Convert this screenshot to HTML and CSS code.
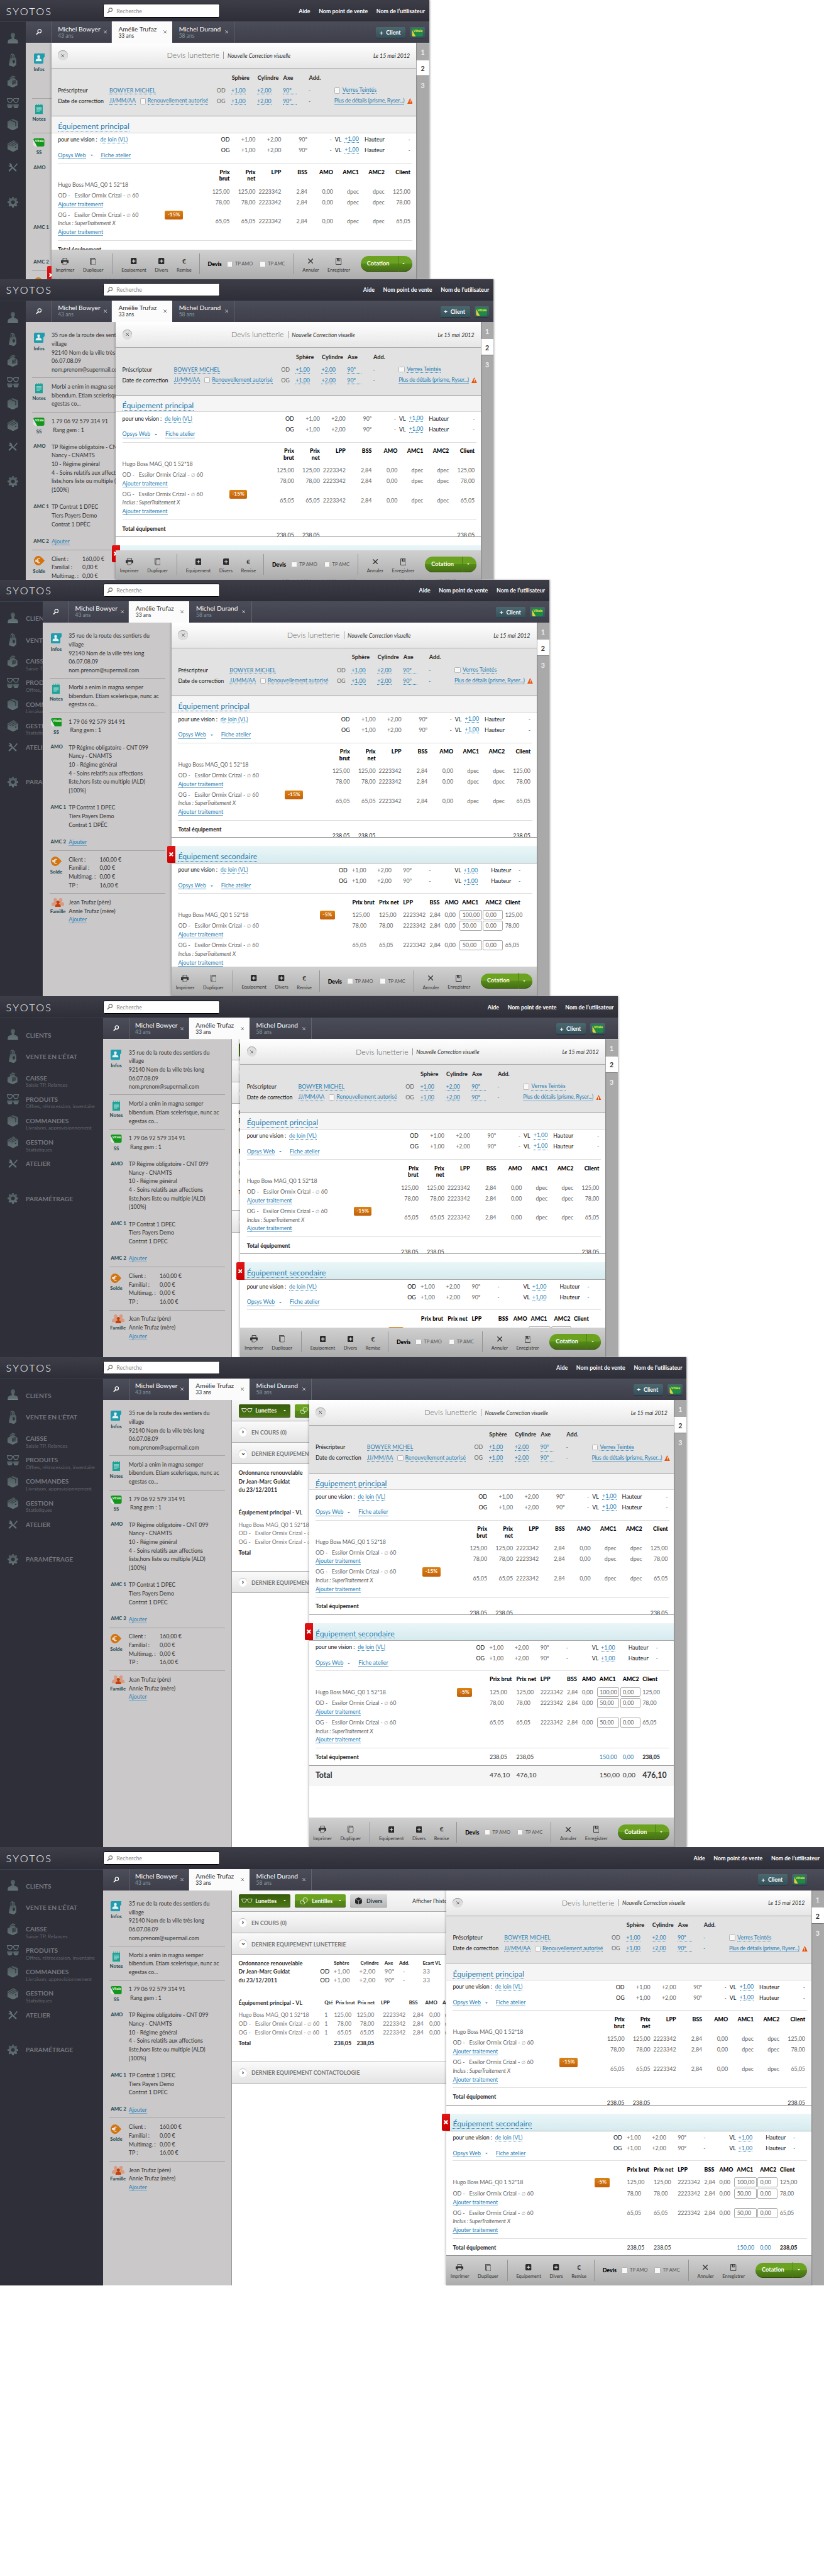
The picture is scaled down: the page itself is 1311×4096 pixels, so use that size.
FILE: index.html
```html
<!DOCTYPE html>
<html lang="fr">
<head>
<meta charset="utf-8">
<title>Syotos – Devis lunetterie</title>
<link rel="stylesheet" href="styles.css">
</head>
<body>
<svg class="sprite" aria-hidden="true">
  <defs>
    <linearGradient id="steel" x1="0" y1="0" x2="0" y2="1"><stop offset="0" stop-color="#4c5a5c"/><stop offset="1" stop-color="#647376"/></linearGradient>
    <clipPath id="vc"><rect width="26" height="19" rx="4"/></clipPath>
  </defs>
  <symbol id="i-search" viewBox="0 0 14 14"><circle cx="8.6" cy="5.2" r="4" fill="none" stroke="currentColor" stroke-width="1.8"/><path d="M6 8.3 1.2 13" stroke="currentColor" stroke-width="2.2"/></symbol>
  <symbol id="i-user" viewBox="0 0 25 25"><path d="M12.5 0c3 0 5 2.300 5 5.500 0 2-.9 4-2.200 5.200v3.300c4.500 1 8.500 2 9.200 6.500V25H.5v-4.500C1.200 16 5.200 15 9.700 14v-3.300C8.400 9.500 7.500 7.500 7.500 5.500 7.500 2.300 9.500 0 12.500 0z" fill="url(#steel)"/><path d="M.5 24.500h24" stroke="#8f9c9e"/></symbol>
  <symbol id="i-bag" viewBox="0 0 18 31"><path d="M5 11V4a3 3 0 0 1 5-2v9M9 10V4a2.500 2.500 0 0 1 4 0v9" fill="none" stroke="#647376" stroke-width="1.500"/><path fill-rule="evenodd" d="M3 11 15 9l2.500 4v13L12 31 0 28zM11.500 15a2.800 4 0 1 0 .1 0z" fill="url(#steel)"/></symbol>
  <symbol id="i-till" viewBox="0 0 24 28"><path d="M5 6 12 0l7 3-4 3 8 6v11l-11 5-12-5V12l6-3z" fill="url(#steel)"/><path d="m6 7 9-3M11 13l8-2v8l-8 2zM13.700 12v8M16.300 12v8M11 16l8-2M11 18.500l8-2" fill="none" stroke="#30313a"/></symbol>
  <symbol id="i-glasses" viewBox="0 0 28 24"><path d="M1 1h10l2 2h2l2-2h10l-1 5q-1 4-5 4-4 0-5-4l-1-3h-2l-1 3q-1 4-5 4-4 0-5-4z" fill="none" stroke="#647376" stroke-width="1.800"/><path d="M0 14h11l2 1h2l2-1h11l-1 5q-1 5-6 5t-5.500-5l-1-3h-1l-1 3q-1 5-5.500 5t-6-5z" fill="url(#steel)"/></symbol>
  <symbol id="i-box" viewBox="0 0 25 27"><path d="m12 0 12.500 5v16L12 27 0 21V6z" fill="url(#steel)"/><path d="m7 3 12 5v9" fill="none" stroke="#30313a" stroke-width="1.800"/></symbol>
  <symbol id="i-files" viewBox="0 0 26 27"><path d="m14 0 11 8v13l-12 6L0 21V8z" fill="url(#steel)"/><path d="m1 11 13-8M5 13l14-8M10 14l13-7" stroke="#30313a" stroke-width="1.300"/><circle cx="19" cy="16" r="1.500" fill="#30313a"/></symbol>
  <symbol id="i-tools" viewBox="0 0 22 21"><path d="M1 1.500 5.500 1 9 4.500l-.500 2L20 18l-2 2.500L6 9H3L.500 6l3 .500 1-2z" fill="#647376"/><path d="m20 1 2 2-7.500 8.500L13 10zM11.500 11.500 3 20.500.500 18 9.500 9.500z" fill="#647376"/></symbol>
  <symbol id="i-gear" viewBox="0 0 25 25"><path fill-rule="evenodd" d="M10.500 0h4l.5 3.300 2.200.9 2.700-2 2.800 2.900-2 2.600.9 2.300 3.400.5v4l-3.400.5-.9 2.200 2 2.700-2.800 2.800-2.700-2-2.200 1-.5 3.300h-4L10 21.700l-2.200-1-2.700 2-2.800-2.800 2-2.700-.9-2.200L0 14.500v-4l3.400-.5.9-2.300-2-2.600 2.800-2.900 2.700 2L10 3.300zM12.500 8a4.500 4.500 0 1 0 .1 0z" fill="url(#steel)"/></symbol>
  <symbol id="i-info" viewBox="0 0 25 24"><path d="M3 0h22v8l-3 3v10q0 3-3 3H3q-3 0-3-3V3q0-3 3-3z" fill="#1f9cad"/><path d="M11 4c2 0 3.300 1.300 3.300 3.300 0 1.200-.6 2.300-1.300 3V12c2.500.7 4.700 1.200 5 3.500V18H4v-2.500C4.300 13.200 6.500 12.700 9 12v-1.700c-.7-.7-1.300-1.800-1.300-3C7.700 5.300 9 4 11 4z" fill="#e4efef"/></symbol>
  <symbol id="i-notes" viewBox="0 0 18 24"><path d="M0 3h2V0h1.500v3H7V0h1.500v3H11V0h1.500v3H15V0h1.500v3H18v21H0z" fill="#1ca296"/><path d="M3 8.500h12M3 11.500h12M3 14.500h12M3 17.500h8" stroke="#cfe8e4" stroke-width="1.300"/></symbol>
  <symbol id="i-vitale" viewBox="0 0 26 19"><g clip-path="url(#vc)"><rect width="26" height="19" fill="#12961c"/><path d="M0 3 9 19H0z" fill="#e4e4e4"/><text x="3.500" y="9" font-family="Lato,sans-serif" font-weight="900" font-size="8" fill="#e6f3df">Vitale</text></g></symbol>
  <symbol id="i-vitale-y" viewBox="0 0 26 19"><g clip-path="url(#vc)"><rect width="26" height="19" fill="#1e8a46"/><path d="M0 3 9 19H0z" fill="#dfd23a"/><text x="3.500" y="9" font-family="Lato,sans-serif" font-weight="900" font-size="8" fill="#eee64a">Vitale</text></g></symbol>
  <symbol id="i-solde" viewBox="0 0 25 22"><path d="M10 0c5 0 8 3 15 11-7 8-10 11-15 11A10 11 0 0 1 10 0z" fill="#d2740f"/><path d="M14 6.500A5 5 0 1 0 14 15.500M3 9.700h8M3 12.300h8" fill="none" stroke="#eee" stroke-width="1.700"/></symbol>
  <symbol id="i-family" viewBox="0 0 30 21"><path d="M9 0a4 4 0 0 1 2.500 7l1.500 2-2 9H0c0-6 1-8 6-9V7a4 4 0 0 1 3-7zm12 0a4 4 0 0 0-2.500 7L17 9l2 9h11c0-6-1-8-6-9V7a4 4 0 0 0-3-7z" fill="#d99a80"/><path d="M15 6a3.500 3.500 0 0 1 2 6.500v1.500c4 1 4.500 3 4.500 7h-13c0-4 .5-6 4.500-7v-1.500A3.500 3.500 0 0 1 15 6z" fill="#c2410c"/></symbol>
  <symbol id="i-warn" viewBox="0 0 13 13"><path d="M6.500 0 13 13H0z" fill="#e8500a"/><path d="M6.500 4v5M6.500 10v1.500" stroke="#fff" stroke-width="1.600"/></symbol>
  <symbol id="i-print" viewBox="0 0 18 17"><path d="M4.500 6V.6h9V6" fill="none" stroke="#333" stroke-width="1.300"/><path d="M1.500 5h15q1.500 0 1.500 1.500V12h-3.500V9h-10v3H0V6.500Q0 5 1.500 5z" fill="#333"/><path d="M4.500 9.500v6.800h6.500l3-3V9.500" fill="none" stroke="#333" stroke-width="1.200"/></symbol>
  <symbol id="i-copy" viewBox="0 0 14 17"><path d="M3 14.500H.7V.7h10.600V3" fill="none" stroke="#333" stroke-width="1.200"/><path d="M3 3h10.300v11l-2 2.300H3z" fill="none" stroke="#333" stroke-width="1.200"/></symbol>
  <symbol id="i-plus" viewBox="0 0 14 15"><rect width="14" height="15" rx="2.500" fill="#2b2b2b"/><path d="M7 3.500v8M3 7.500h8" stroke="#ddd" stroke-width="1.800"/></symbol>
  <symbol id="i-cross" viewBox="0 0 12 12"><path d="m.5.5 11 11M11.500.5l-11 11" stroke="currentColor" stroke-width="2"/></symbol>
  <symbol id="i-kill" viewBox="0 0 12 12"><path d="m1 1 10 10M11 1 1 11" stroke="currentColor" stroke-width="3.800"/></symbol>
  <symbol id="i-thin" viewBox="0 0 8 8"><path d="m.5.5 7 7M7.500.5l-7 7" stroke="currentColor" stroke-width="1.100"/></symbol>
  <symbol id="i-save" viewBox="0 0 14 16"><path d="M.7.700h11l1.600 1.600v13H.700z" fill="none" stroke="#333" stroke-width="1.300"/><path d="M4 1v6h6V1" fill="none" stroke="#333" stroke-width="1.200"/><path d="M4 1h3v5H4z" fill="#333"/></symbol>
  <symbol id="i-specs" viewBox="0 0 26 10"><path d="M.8.800h9.500l2 1.500h1.400l2-1.500h9.500l-1 3.500Q23 9.200 19.500 9.200T15 5l-1-2.500h-2L11 5q-1 4.200-4.500 4.200T1.800 4.300z" fill="none" stroke="#fff" stroke-width="1.300"/></symbol>
  <symbol id="i-lens" viewBox="0 0 19 17"><circle cx="12.700" cy="6" r="5.300" fill="none" stroke="#fff" stroke-width="1.100"/><ellipse cx="6" cy="12" rx="5.500" ry="3.800" transform="rotate(35 6 12)" fill="none" stroke="#fff" stroke-width="1.100"/></symbol>
  <symbol id="i-cube" viewBox="0 0 16 17"><path d="m8 0 8 3.500-8 3.500L0 3.500zM0 4.500l7.500 3.300V17L0 13.200zM16 4.500 8.500 7.800V17L16 13.200z" fill="#262626"/></symbol>
</svg>

<main class="board">
  <div class="screen screen-a"></div>
  <div class="screen screen-b"></div>
  <div class="screen screen-c"></div>
  <div class="screen screen-d"></div>
  <div class="screen screen-e"></div>
  <div class="screen screen-f"></div>
</main>

<template id="screen">
  <header class="top">
    <div class="brand">SYOTOS</div>
    <div class="search"><svg><use href="#i-search"/></svg>Recherche</div>
    <nav class="links"><span>Aide</span><span>Nom point de vente</span><span>Nom de l’utilisateur</span></nav>
  </header>
  <div class="below">
    <aside class="side">
      <div class="entry"><i><svg width="25" height="25"><use href="#i-user"/></svg></i><p><b>CLIENTS</b></p></div>
      <div class="entry"><i><svg width="18" height="31"><use href="#i-bag"/></svg></i><p><b>VENTE EN L’ÉTAT</b></p></div>
      <div class="entry duo"><i><svg width="24" height="28"><use href="#i-till"/></svg></i><p><b>CAISSE</b><small>Saisie TP, Relances</small></p></div>
      <div class="entry duo"><i><svg width="28" height="24"><use href="#i-glasses"/></svg></i><p><b>PRODUITS</b><small>Offres, rétrocession, inventaire</small></p></div>
      <div class="entry duo"><i><svg width="25" height="27"><use href="#i-box"/></svg></i><p><b>COMMANDES</b><small>Livraison, approvisionnement</small></p></div>
      <div class="entry duo"><i><svg width="26" height="27"><use href="#i-files"/></svg></i><p><b>GESTION</b><small>Statistiques</small></p></div>
      <div class="entry"><i><svg width="22" height="21"><use href="#i-tools"/></svg></i><p><b>ATELIER</b></p></div>
      <div class="entry last"><i><svg width="25" height="25"><use href="#i-gear"/></svg></i><p><b>PARAMÉTRAGE</b></p></div>
    </aside>
    <div class="main">
      <div class="tabs">
        <div class="tab find"><svg width="14" height="14"><use href="#i-search"/></svg></div>
        <div class="tab"><p>Michel Bowyer<small>43 ans</small></p><svg width="8" height="8"><use href="#i-thin"/></svg></div>
        <div class="tab on"><p>Amélie Trufaz<small>33 ans</small></p><svg width="8" height="8"><use href="#i-thin"/></svg></div>
        <div class="tab wide"><p>Michel Durand<small>58 ans</small></p><svg width="8" height="8"><use href="#i-thin"/></svg></div>
        <div class="btn-client"><span>+</span>Client</div>
        <div class="btn-vitale"><svg width="27" height="19"><use href="#i-vitale-y"/></svg></div>
      </div>
      <div class="work">
        <section class="patient">
          <div class="sec first">
            <div class="fact"><div class="tag t5"><svg width="25" height="24"><use href="#i-info"/></svg>Infos</div><p>35 rue de la route des sentiers du<br>village<br>92140 Nom de la ville très long<br>06.07.08.09<br>nom.prenom@supermail.com</p></div>
          </div>
          <div class="sec">
            <div class="fact"><div class="tag"><svg width="18" height="24"><use href="#i-notes"/></svg>Notes</div><p>Morbi a enim in magna semper<br>bibendum. Etiam scelerisque, nunc ac<br>egestas co...</p></div>
          </div>
          <div class="sec">
            <div class="fact"><div class="tag ss"><svg width="26" height="19"><use href="#i-vitale"/></svg>SS</div><p>1 79 06 92 579 314 91<br>&nbsp;Rang gem : 1</p></div>
            <div class="fact gap"><div class="tag txt">AMO</div><p>TP Régime obligatoire - CNT 099<br>Nancy - CNAMTS<br>10 - Régime général<br>4 - Soins relatifs aux affections<br>liste,hors liste ou multiple (ALD)<br>{100%}</p></div>
            <div class="fact gap"><div class="tag txt">AMC 1</div><p>TP Contrat 1 DPEC<br>Tiers Payers Demo<br>Contrat 1 DPËC</p></div>
            <div class="fact gap"><div class="tag txt">AMC 2</div><p><a class="u">Ajouter</a></p></div>
          </div>
          <div class="sec">
            <div class="fact"><div class="tag t5"><svg width="25" height="22"><use href="#i-solde"/></svg>Solde</div>
              <div class="sums"><span>Client :</span><span>160,00 €</span><span>Familial :</span><span>0,00 €</span><span>Multimag. :</span><span>0,00 €</span><span>TP :</span><span>16,00 €</span></div></div>
          </div>
          <div class="sec end">
            <div class="fact"><div class="tag fam"><svg width="30" height="21"><use href="#i-family"/></svg>Famille</div><p>Jean Trufaz (père)<br>Annie Trufaz (mère)<br><a class="u">Ajouter</a></p></div>
          </div>
        </section>

        <section class="history">
          <div class="tools">
            <div class="gbtn dark"><svg width="26" height="10"><use href="#i-specs"/></svg><span>Lunettes</span><i class="caret"></i></div>
            <div class="gbtn"><svg width="19" height="17"><use href="#i-lens"/></svg><span>Lentilles</span><i class="caret"></i></div>
            <div class="gbtn grey"><svg width="16" height="17"><use href="#i-cube"/></svg><span>Divers</span></div>
            <span class="show">Afficher l’historique</span>
          </div>
          <div class="fold"><i class="knob">›</i>EN COURS (0)</div>
          <div class="fold"><i class="knob down">›</i>DERNIER EQUIPEMENT LUNETTERIE</div>
          <div class="last-eq">
            <div class="presc">
              <b>Ordonnance renouvelable</b><span></span><b class="h">Sphère</b><b class="h">Cylindre</b><b class="h">Axe</b><b class="h">Add.</b><b class="h">Ecart VL</b>
              <b>Dr Jean-Marc Guidat</b><span class="eye">OD</span><span>+1,00</span><span>+2,00</span><span>90º</span><span>&nbsp; -</span><span>33</span>
              <b>du 23/12/2011</b><span class="eye">OD</span><span>+1,00</span><span>+2,00</span><span>90º</span><span>&nbsp; -</span><span>33</span>
            </div>
            <div class="lines-head"><b>Équipement principal - VL</b><b>Qté</b><b>Prix brut</b><b>Prix net</b><b>LPP</b><b>BSS</b><b>AMO</b><b>AMC1</b></div>
            <div class="lines">
              <span class="hb">Hugo Boss MAG_Q0 1 52*18</span><span>1</span><span>125,00</span><span>125,00</span><span>2223342</span><span>2,84</span><span>0,00</span><span>dpec</span>
              <span>OD -&nbsp;&nbsp; Essilor Ormix Crizal - <em>∅</em> 60</span><span>1</span><span>78,00</span><span>78,00</span><span>2223342</span><span>2,84</span><span>0,00</span><span>dpec</span>
              <span>OG -&nbsp;&nbsp; Essilor Ormix Crizal - <em>∅</em> 60</span><span>1</span><span>65,05</span><span>65,05</span><span>2223342</span><span>2,84</span><span>0,00</span><span>dpec</span>
            </div>
            <div class="lines sum"><b>Total</b><b></b><b>238,05</b><b>238,05</b></div>
          </div>
          <div class="fold"><i class="knob">›</i>DERNIER EQUIPEMENT CONTACTOLOGIE</div>
        </section>

        <div class="rail"><span>1</span><span class="on">2</span><span>3</span></div>

        <article class="quote">
          <div class="q-head">
            <i class="close"><svg width="8" height="8"><use href="#i-thin"/></svg></i>
            <h1>Devis lunetterie</h1><em>Nouvelle Correction visuelle</em><em class="date">Le 15 mai 2012</em>
          </div>
          <div class="q-rx">
            <span></span><span></span><span></span><b>Sphère</b><b>Cylindre</b><b>Axe</b><b>Add.</b><span></span>
            <span class="k">Préscripteur</span><span><a>BOWYER MICHEL</a></span><span>OD</span><span><a>+1,00</a></span><span><a>+2,00</a></span><span><a class="w33">90º</a></span><span class="blue">-</span><span class="opt"><i class="chk"></i><a>Verres Teintés</a></span>
            <span class="k">Date de correction</span><span class="opt"><a class="jj">JJ/MM/AA</a><i class="chk mid"></i><a>Renouvellement autorisé</a></span><span>OG</span><span><a>+1,00</a></span><span><a>+2,00</a></span><span><a class="w33">90º</a></span><span class="blue">-</span><span class="opt"><a class="u tight">Plus de détails (prisme, Ryser...)</a><svg width="13" height="13"><use href="#i-warn"/></svg></span>
          </div>
          <div class="eq one">
            <h2><a>Équipement principal</a></h2>
            <div class="vision">
              <div class="left"><p>pour une vision :<a>de loin (VL)</a></p><p class="more"><a class="u">Opsys Web</a><i class="caret"></i><a class="u">Fiche atelier</a></p></div>
              <div class="eyes">
                <span class="k">OD</span><span>+1,00</span><span>+2,00</span><span>90º</span><span>-&nbsp;</span><span class="vl">VL <a>+1,00</a></span><span class="k">Hauteur</span><span class="blue">-</span>
                <span class="k">OG</span><span>+1,00</span><span>+2,00</span><span>90º</span><span>-&nbsp;</span><span class="vl">VL <a>+1,00</a></span><span class="k">Hauteur</span><span class="blue">-</span>
              </div>
            </div>
            <div class="items">
              <div class="names">
                <div class="hb">Hugo Boss MAG_Q0 1 52*18</div>
                <div>OD -&nbsp;&nbsp; Essilor Ormix Crizal - <em>∅</em> 60<br><a class="u">Ajouter traitement</a></div>
                <div class="disc">OG -&nbsp;&nbsp; Essilor Ormix Crizal - <em>∅</em> 60<span class="badge">-15%</span><br><cite>Inclus : SuperTraitement X</cite><br><a class="u">Ajouter traitement</a></div>
              </div>
              <div class="nums">
                <b>Prix<br>brut</b><b>Prix<br>net</b><b>LPP</b><b>BSS</b><b>AMO</b><b>AMC1</b><b>AMC2</b><b>Client</b>
                <span>125,00</span><span>125,00</span><span>2223342</span><span>2,84</span><span>0,00</span><span>dpec</span><span>dpec</span><span>125,00</span>
                <span>78,00</span><span>78,00</span><span>2223342</span><span>2,84</span><span>0,00</span><span>dpec</span><span>dpec</span><span>78,00</span>
                <span>65,05</span><span>65,05</span><span>2223342</span><span>2,84</span><span>0,00</span><span>dpec</span><span>dpec</span><span>65,05</span>
              </div>
            </div>
            <div class="sum"><b>Total équipement</b><span>238,05</span><span>238,05</span><span class="far">238,05</span></div>
          </div>
          <div class="eq two">
            <i class="kill"><svg width="10" height="10"><use href="#i-kill"/></svg></i>
            <h2><a>Équipement secondaire</a></h2>
            <div class="vision">
              <div class="left"><p>pour une vision :<a>de loin (VL)</a></p><p class="more"><a class="u">Opsys Web</a><i class="caret"></i><a class="u">Fiche atelier</a></p></div>
              <div class="eyes">
                <span class="k">OD</span><span>+1,00</span><span>+2,00</span><span>90º</span><span>-</span><span class="k">VL</span><span><a>+1,00</a></span><span class="k">Hauteur</span><span class="blue">-</span>
                <span class="k">OG</span><span>+1,00</span><span>+2,00</span><span>90º</span><span>-</span><span class="k">VL</span><span><a>+1,00</a></span><span class="k">Hauteur</span><span class="blue">-</span>
              </div>
            </div>
            <div class="rows">
              <div class="row head"><span></span><b>Prix brut</b><b>Prix net</b><b>LPP</b><b>BSS</b><b>AMO</b><b class="in">AMC1</b><b class="in">AMC2</b><b>Client</b></div>
              <div class="row"><span class="disc"><span class="hb">Hugo Boss MAG_Q0 1 52*18</span><span class="badge">-5%</span></span><span>125,00</span><span>125,00</span><span>2223342</span><span>2,84</span><span>0,00</span><span class="box">100,00</span><span class="box">0,00</span><span>125,00</span></div>
              <div class="row"><span>OD -&nbsp;&nbsp; Essilor Ormix Crizal - <em>∅</em> 60<br><a class="u">Ajouter traitement</a></span><span>78,00</span><span>78,00</span><span>2223342</span><span>2,84</span><span>0,00</span><span class="box">50,00</span><span class="box">0,00</span><span>78,00</span></div>
              <div class="row"><span>OG -&nbsp;&nbsp; Essilor Ormix Crizal - <em>∅</em> 60<br><cite>Inclus : SuperTraitement X</cite><br><a class="u">Ajouter traitement</a></span><span>65,05</span><span>65,05</span><span>2223342</span><span>2,84</span><span>0,00</span><span class="box">50,00</span><span class="box">0,00</span><span>65,05</span></div>
            </div>
            <div class="row total"><b>Total équipement</b><span>238,05</span><span>238,05</span><span></span><span></span><span></span><span class="in blue">150,00</span><span class="in blue">0,00</span><b>238,05</b></div>
            <div class="row grand"><b>Total</b><span>476,10</span><span>476,10</span><span></span><span></span><span></span><span class="in">150,00</span><span class="in">0,00</span><b>476,10</b></div>
          </div>
          <footer class="q-foot">
            <div class="grp g1"><div class="act"><svg width="18" height="17"><use href="#i-print"/></svg>Imprimer</div><div class="act"><svg width="14" height="17"><use href="#i-copy"/></svg>Dupliquer</div></div>
            <div class="grp g2"><div class="act"><svg width="14" height="15"><use href="#i-plus"/></svg>Equipement</div><div class="act"><svg width="14" height="15"><use href="#i-plus"/></svg>Divers</div><div class="act"><strong>€</strong>Remise</div></div>
            <div class="grp g3"><b>Devis</b><i class="chk"></i><span>TP AMO</span><i class="chk"></i><span>TP AMC</span></div>
            <div class="grp g4"><div class="act"><svg width="12" height="12"><use href="#i-cross"/></svg>Annuler</div><div class="act"><svg width="14" height="16"><use href="#i-save"/></svg>Enregistrer</div></div>
            <div class="cta"><span>Cotation</span><i class="caret"></i></div>
          </footer>
        </article>
      </div>
    </div>
  </div>
</template>
<script src="app.js"></script>
</body>
</html>
```
FILE: app.js
```js
// Every screen shows the same application at another window size.
const tpl = document.getElementById('screen');
document.querySelectorAll('.screen').forEach(el => el.append(tpl.content.cloneNode(true)));
```
FILE: styles.css
```css
* { box-sizing: border-box; }
html, body { margin: 0; background: #fff; overflow: hidden; }
body { font-family: Lato, "Liberation Sans", sans-serif; font-size: 13px; color: #333; }
p, h1, h2 { margin: 0; font-weight: 400; }
i { font-style: normal; }
svg { display: block; flex: none; }
.sprite { position: absolute; width: 0; height: 0; }

.board { width: 1920px; height: 6000px; zoom: .68281; overflow: hidden; }
.screen { display: flex; flex-direction: column; box-shadow: 3px 0 4px rgba(0,0,0,.35); }
.screen-a { width: 1000px; height: 650px; --side: 60px; }
.screen-b { width: 1150px; height: 700px; --side: 60px; }
.screen-c { width: 1280px; height: 970px; --side: 100px; }
.screen-d { width: 1440px; height: 840px; --side: 240px; --edge: 30px; }
.screen-e { width: 1600px; height: 1142px; --side: 240px; }
.screen-f { width: 1920px; height: 1020px; --side: 240px; --edge: 40px; box-shadow: none; }

/* top bar */
.top { flex: none; height: 50px; display: flex; align-items: center; background: linear-gradient(#3c3d47, #2d2e37); position: relative; z-index: 1; }
.brand { width: 240px; padding-left: 14px; font-size: 24px; font-weight: 300; letter-spacing: 3.2px; color: #fff; }
.search { width: 273px; height: 31px; border: 1px solid #000; border-radius: 4px; background: #fff; display: flex; align-items: center; gap: 8px; padding-left: 8px; color: #8b8b8b; }
.search svg { width: 14px; height: 14px; color: #777; }
.links { margin-left: auto; padding-right: 10px; display: flex; gap: 20px; color: #fff; font-weight: 700; }

/* left menu */
.below { flex: 1; min-height: 0; display: flex; }
.side { flex: none; width: var(--side); overflow: hidden; background: #2e2f38; border-top: 1px solid #38424f; padding-top: 14px; color: #76777f; }
.entry { display: flex; width: 240px; height: 50px; }
.entry.last { margin-top: 31px; }
.entry i { width: 60px; display: grid; place-items: center; }
.entry:first-child i { padding-bottom: 4px; }
.entry p { display: flex; flex-direction: column; justify-content: center; padding-top: 2px; }
.entry b { font-size: 15px; line-height: 17px; font-weight: 700; white-space: nowrap; }
.entry.duo p { justify-content: flex-start; padding-top: 17px; }
.entry small { font-size: 12px; line-height: 15px; color: #63646d; white-space: nowrap; }
.screen-a .side p, .screen-b .side p { display: none; }

/* client tabs */
.main { flex: 1; min-width: 0; display: flex; flex-direction: column; }
.tabs { flex: none; height: 50px; display: flex; background: linear-gradient(#4b4d58, #3d3e49); padding-right: var(--edge, 10px); }
.tab { width: 140px; display: flex; align-items: center; border-right: 1px solid #62646f; padding-left: 14px; color: #fff; font-size: 15px; }
.tab p { line-height: 16px; width: 106px; white-space: nowrap; }
.tab small { display: block; font-size: 12.500px; line-height: 15px; color: #83999e; }
.tab.find { width: 61px; padding-left: 23px; }
.tab.on { background: #fbfbfb; color: #333; border-color: #fbfbfb; padding-left: 15px; }
.tab.on small { color: #333; }
.tab.on p { width: 105px; }
.tab.wide { width: 146px; padding-left: 16px; }
.tab.wide p { width: 107px; }
.btn-client, .btn-vitale { height: 25px; margin-top: 13px; border-radius: 3px; background: linear-gradient(#4b686f, #35505a); box-shadow: 0 1px 0 #1c2d34; color: #fff; display: flex; align-items: center; }
.btn-client { width: 69px; margin-left: auto; padding-left: 8px; gap: 7px; font-weight: 700; }
.btn-client span { font-weight: 900; font-size: 15px; }
.btn-vitale { width: 35px; margin-left: 10px; padding-left: 4px; }

.work { flex: 1; min-height: 0; display: flex; position: relative; clip-path: inset(0); }

/* patient summary */
.patient { flex: none; width: 301px; background: #cac8c9; border-right: 1px solid #999; overflow: hidden; color: #333; line-height: 20px; white-space: nowrap; letter-spacing: -.05px; }
.sec { margin: 0 15px; padding: 10px 0 9px; border-bottom: 1px solid #a3a2a3; }
.sec.first { padding: 21px 0 8px; }
.sec.end { border: 0; }
.fact { display: flex; }
.fact.gap { margin-top: 20px; }
.tag { flex: none; width: 45px; height: 40px; padding: 2px 13px 0 0; display: flex; flex-direction: column; align-items: center; gap: 3px; font-size: 11.500px; line-height: 16px; font-weight: 900; color: #2e5058; letter-spacing: 0; }
.tag.t5 { padding-top: 4px; gap: 5px; }
.tag.ss { gap: 5px; }
.tag.fam { padding: 0 5px 0 0; gap: 2px; }
.tag.txt { height: 20px; padding: 1px 0 0 3px; align-items: flex-start; }
.sums { display: grid; grid-template-columns: 72px auto; }

a { color: #2b80b3; border-bottom: 1px dotted #2b80b3; white-space: nowrap; line-height: 1; }
a.u { border-bottom-style: solid; border-color: #6faad0; }
.blue { color: #2b80b3; }
.hb { letter-spacing: -.18px; }
.caret { display: inline-block; border: 3.500px solid transparent; border-top: 4px solid currentColor; border-bottom: 0; }

/* purchase history */
.history { flex: 1; min-width: 0; overflow: hidden; background: #fff; white-space: nowrap; }
.screen-a .history, .screen-b .history, .screen-c .history { display: none; }
.history > * { width: 1000px; }
.tools { height: 50px; display: flex; align-items: center; gap: 10px; padding: 2px 15px 0; background: linear-gradient(#f8f8f8, #ebebeb); border-bottom: 1px solid #aaa; }
.gbtn { height: 31px; width: 121px; border-radius: 3px; border-bottom: 1px solid #1d2e08; padding-left: 7px; display: flex; align-items: center; background: linear-gradient(#6ba321 48%, #558a19 52%, #527f17); color: #fff; font-weight: 700; }
.gbtn span { margin-left: 6px; }
.gbtn .caret { margin-left: auto; margin-right: 10px; }
.gbtn.dark { background: linear-gradient(#365a0c, #4a7712); }
.gbtn:nth-child(2) { width: 119px; padding-left: 11px; }
.gbtn:nth-child(2) span { margin-left: 10px; }
.gbtn.grey { width: 86px; padding-left: 11px; background: linear-gradient(#dadada, #b8b8b8); color: #2a3d44; border-color: #888; }
.gbtn.grey span { margin-left: 11px; }
.show { margin-left: 49px; }
.fold { height: 50px; display: flex; align-items: center; gap: 10px; padding: 2px 0 0 15px; background: linear-gradient(#fafafa, #e4e4e4); border-bottom: 1px solid #aaa; color: #777; font-weight: 700; letter-spacing: -.05px; }
.knob { width: 20px; height: 20px; border-radius: 50%; background: #fff; box-shadow: inset 0 1px 1px #aaa; display: grid; place-items: center; color: #222; font-size: 17px; line-height: 15px; font-weight: 900; padding-bottom: 3px; }
.knob.down { transform: rotate(90deg); box-shadow: inset 1px 0 1px #aaa; }
.last-eq { height: 250px; padding: 10px 0 0 15px; line-height: 20px; border-bottom: 1px solid #aaa; }
.presc { display: grid; grid-template-columns: 190px 31px 60px 59px 34px 55px auto; font-size: 14px; letter-spacing: .6px; color: #777; }
.presc b { font-size: 13px; letter-spacing: 0; color: #333; }
.presc .h { font-size: 11.500px; font-weight: 900; }
.presc .h:nth-child(3) { margin-left: 1px; }
.presc .h:nth-child(4) { margin-left: 3px; }
.presc .eye { color: #111; letter-spacing: 0; }
.lines-head { display: grid; grid-template-columns: 200px 26px 51px 54.600px 65.400px 38px 40px auto; padding-top: 32px; font-size: 11.500px; }
.lines-head b { font-weight: 900; }
.lines-head b:first-child { font-size: 13px; font-weight: 700; }
.lines { display: grid; grid-template-columns: 200px 9px 54px 53px 73px 42px 39px 50px; padding-top: 9px; color: #777; }
.lines > :nth-child(8n+3), .lines > :nth-child(8n+4), .lines > :nth-child(8n+5), .lines > :nth-child(8n+6), .lines > :nth-child(8n+7) { text-align: right; }
.lines > :nth-child(8n) { padding-left: 11px; }
.lines.sum { padding-top: 5px; color: #333; }
.lines.sum b { font-weight: 900; }
em { font-style: normal; }
.lines em, .names em, .rows em { color: #999; font-family: "DejaVu Sans", sans-serif; font-size: 11px; line-height: 1; }

/* page rail */
.rail { flex: none; width: 30px; margin-left: auto; background: linear-gradient(90deg, #999, #a9a9a9 4px); display: flex; flex-direction: column; color: #eee; font-size: 15.500px; font-weight: 700; position: relative; }
.rail span { height: 40px; display: grid; place-items: center; padding-top: 4px; }
.rail .on { height: 38px; background: #fff; color: #333; border-radius: 0 2px 2px 0; border-bottom: 1px solid #777; }

/* quote drawer */
.quote { position: absolute; top: 0; bottom: 0; right: 30px; width: 850px; background: #fff; box-shadow: -2px 0 5px rgba(0,0,0,.3), 1px 0 0 #888; color: #666; display: flex; flex-direction: column; white-space: nowrap; }
.quote > * { flex: none; }
.q-head { height: 60px; padding: 0 15px; display: flex; align-items: center; border-bottom: 1px solid #aaa; background: linear-gradient(#fff, #e6e6e6); color: #333; font-size: 12.850px; }
.close { width: 23px; height: 23px; border-radius: 50%; background: #ddd; box-shadow: inset 0 1px 1px #888; display: grid; place-items: center; }
.q-head h1 { margin: 0 8px 0 231px; font-size: 18px; font-weight: 300; line-height: 17px; color: #666; border-right: 1px solid #999; width: 133px; }
.q-head em { font-style: italic; padding-top: 1px; }
.q-head .date { margin-left: auto; }
.q-rx { height: 111px; padding: 11px 9px 0 15px; background: #e2e2e2; border-bottom: 1px solid #999; display: grid; grid-template-columns: 120px 250px 34px 60px 60px 60px 60px auto; grid-template-rows: 26.500px 25px 25px; line-height: 20px; }
.q-rx > span { line-height: 25px; }
.q-rx b { color: #333; font-weight: 900; font-size: 13.300px; margin-left: 1px; }
.k { color: #111; }
.opt { display: flex; align-items: center; padding-top: 1.500px; }
.opt a { line-height: 15px; }
.opt svg { margin-left: 6px; }
.opt .chk { margin-right: 5px; }
.opt .mid { margin: 0 4px 0 10px; }
.jj { letter-spacing: -.3px; }
.tight { letter-spacing: -.38px; }
.chk { flex: none; width: 14px; height: 14px; border-radius: 2px; background: #f8f8f8; border: 1px solid #b4b4b4; }
.w33 { display: inline-block; width: 33px; line-height: 15px; }

.eq h2 { height: 39px; padding: 9px 15px 0; border-bottom: 1px solid #d5d5d5; background: #f5f5f5; font-size: 18px; line-height: 30px; }
.eq h2 a { display: inline-block; line-height: 20px; }
.vision { height: 71px; margin: 0 10px 0 15px; border-bottom: 1px solid #ddd; display: flex; }
.vision .left p { line-height: 20px; padding-top: 5px; color: #111; letter-spacing: -.12px; }
.vision .left p a { margin-left: 7px; letter-spacing: 0; }
.vision .left .more { padding-top: 19px; display: flex; align-items: center; color: #2b80b3; }
.vision .left .more a { margin: 0; line-height: 15px; }
.more .caret { margin: 0 19px 0 10px; }
.eyes { display: grid; line-height: 25px; grid-auto-rows: 25px; padding-top: 2.500px; margin-left: auto; }
.one .eyes, .nums { grid-template-columns: 60px 60px 60px 61px 60px 60px 60px 60px; margin-right: 4px; text-align: right; }
.vl { display: flex; justify-content: space-between; align-items: center; padding-left: 4px; color: #111; }
.vl a { line-height: 15px; }
.one { height: 330px; border-bottom: 1px solid #999; overflow: hidden; }
.items { display: flex; justify-content: space-between; margin: 0 10px 0 15px; height: 180px; border-bottom: 1px solid #ddd; }
.names { line-height: 20px; padding-top: 37px; width: 320px; }
.names > div { padding: 2.500px 0; }
cite { font-style: italic; letter-spacing: -.2px; }
.badge { height: 21px; line-height: 20px; border-radius: 3px; background: linear-gradient(#db8212, #c2600c); color: #fff; font-size: 12.300px; font-weight: 700; padding: 0 6.500px; float: right; letter-spacing: 0; }
.nums { display: grid; grid-template-rows: 39.500px 25px 45px 45px; line-height: 25px; padding-top: 12.500px; }
.nums b { line-height: 15.500px; color: #000; font-weight: 900; }
.one .sum { display: grid; grid-template-columns: 340px 60px 60px auto; margin: 0 14px 0 15px; padding-top: 10px; line-height: 20px; color: #333; text-align: right; }
.one .sum b { text-align: left; font-weight: 900; }
.one .sum span { padding-top: 15px; }

.two { position: relative; margin-top: 19px; }
.two h2 { height: 41px; padding-top: 10px; background: linear-gradient(#eaf6f8, #d6ebef); border-color: #aaa; }
.two .vision { height: 70px; }
.two .eyes { grid-template-columns: 31px 59px 60px 60px 60px 21px 64px 64px 17px; margin-right: 15px; }
.kill { position: absolute; left: -10px; top: 0; width: 19px; height: 40px; background: linear-gradient(#e11616, #cb0000); border-radius: 3px 0 0 3px; display: grid; place-items: center; color: #fff; }
.rows { height: 181px; margin: 0 10px 0 15px; border-bottom: 1px solid #ddd; }
.row { display: grid; grid-template-columns: 406px 62px 56px 62px 35px 35px 54px 52px auto; line-height: 20px; padding: 2.500px 0; }
.row.head { padding: 10px 0 7px; color: #000; }
.row.head b { font-weight: 900; letter-spacing: .12px; }
.in { padding-left: 6px; }
.box { height: 23px; width: 52px; margin: -1.500px 0; border: 1px solid #a8a8a8; border-radius: 3px; padding-left: 5px; line-height: 21px; }
.box + .box { width: 47px; }
.disc .badge { margin-right: 41px; }
.names .disc .badge { margin-right: 29px; }
.total { padding: 10px 0 9px 15px; height: 40px; border-bottom: 1px solid #888; color: #333; }
.row.total b { font-weight: 900; }
.grand { height: 48px; padding: 13px 0 0 15px; background: #f5f5f5; color: #333; font-size: 15px; }
.grand b { font-size: 18px; font-weight: 700; }

.quote .q-foot { position: absolute; left: 0; right: 0; bottom: 0; height: 69px; background: linear-gradient(#d0d0d0, #adadad); border-bottom: 1px solid #949494; display: flex; align-items: center; color: #333; font-size: 11px; }
.grp { height: 49px; display: flex; align-items: center; gap: 20px; border-right: 1px solid #939393; }
.g1 { width: 143px; padding-left: 9.500px; }
.g2 { width: 202px; padding-left: 20px; }
.g3 { width: 220px; padding-left: 19px; gap: 5px; color: #555; }
.g3 b { color: #000; font-size: 13px; font-weight: 900; margin-right: 7px; }
.g3 span + .chk { margin-left: 11px; }
.g4 { border: 0; padding-left: 20px; }
.act { height: 45px; display: flex; flex-direction: column; align-items: center; justify-content: flex-end; line-height: 13px; }
.act svg, .act strong { margin: auto; }
.act strong { font-size: 15px; }
.cta { margin-left: auto; margin-right: 10px; width: 120px; height: 36px; border-radius: 18px; background: linear-gradient(#6ba321 49%, #558a19 51%, #466f14); border-bottom: 1px solid #2f4a0d; display: flex; align-items: center; color: #fff; font-size: 13.500px; font-weight: 700; }
.cta span { width: 88px; padding-left: 15px; height: 36px; line-height: 35px; border-right: 1px solid #4d7d16; }
.cta .caret { margin-left: 10px; }
```
